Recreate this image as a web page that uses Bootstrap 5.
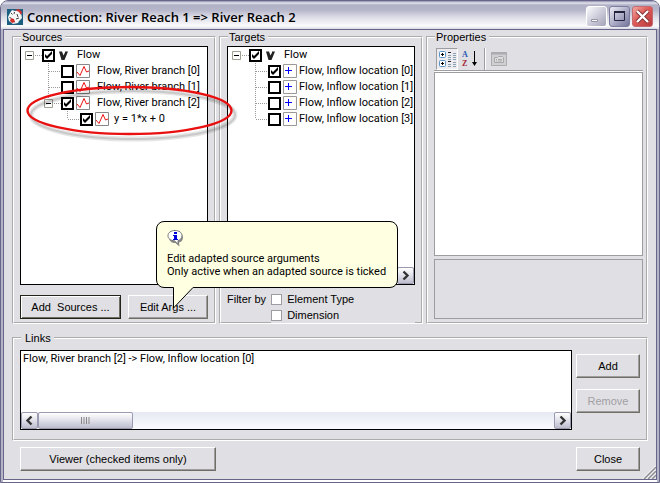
<!DOCTYPE html>
<html lang="en">
<head>
<meta charset="utf-8">
<meta name="viewport" content="width=device-width, initial-scale=1">
<title>Connection: River Reach 1 =&gt; River Reach 2</title>
<link href="https://cdn.jsdelivr.net/npm/bootstrap@5.3.0/dist/css/bootstrap.min.css" rel="stylesheet">
<style>
:root{--face:#e0dfe3;--frame:#67668a;--edge:#9d9da1;--ui:"Liberation Sans",Arial,sans-serif}
body{font:11px/16px Roboto,"Liberation Sans",Arial,sans-serif;color:#000;background:#fff}
.win{border:1px solid var(--frame);border-radius:8px 8px 0 0;padding:0 2px 2px;background:#fff;box-shadow:inset 2px 0 #b4b3c8,inset -2px 0 #b4b3c8,inset 0 -1px #fff}
.titlebar{height:28px;margin:0 -2px;padding:3px 6px 0 6px;border-radius:7px 7px 0 0;background:linear-gradient(#8f8fae 0,#e4e4ee 2px,#b0b0c6 4px,#b6b6ca 9px,#dcdce6 16px,#fbfbfd 25px,#d8d8e4 28px)}
.titlebar h1{font:600 13px/20px "Open Sans","Noto Sans",sans-serif;padding-left:4px}
.tb-set{gap:2px}
.tb-btn{width:21px;height:21px;padding:0;border:1px solid #fff;border-radius:3px;background:linear-gradient(135deg,#fafafd,#c4c4d4 60%,#a3a3b9);line-height:0}
.tb-max{background:linear-gradient(135deg,#eeeef6,#a9a9c4 55%,#74749c);border-color:#7c7c9f}
.tb-close{background:linear-gradient(135deg,#f0a9a0,#dd5a57 45%,#b93a3f);border-color:#c46a70}
.client{border:1px solid var(--frame);background:var(--face);padding:1px 8px 8px}
.groups{display:grid;grid-template-columns:204fr 204fr 222fr;gap:3px}
.groupbox{border:2px groove #fff;padding:3px 6px;min-width:0}
.groupbox legend{float:none;width:auto;font:11px/12px var(--ui);padding:0 3px 0 1px;margin:0 0 0 1px}
.groupbox .legend-links{padding:0 3px 0 4px}
.groupbox.links{padding:6px 6px 9px}
.groupbox.props{padding-right:3px}
.sunken{background:#fff;border:1px solid #000}
.link-list{min-height:80px}
.link-text{padding:0 2px}
.tree{padding:0 0 0 4px;margin:0;list-style:none;overflow:hidden;white-space:nowrap}
.tree li{display:flex;align-items:center;height:16px}
.tree svg{flex:none}
.tree label{display:flex;align-items:center}
.tick{appearance:none;flex:none;width:13px;height:13px;border:2px solid #000;background:#fff;margin:0;border-radius:0}
.tick:checked{background:#fff url("data:image/svg+xml,%3Csvg xmlns='http://www.w3.org/2000/svg' viewBox='0 0 9 9'%3E%3Cpath d='M1 3v3l2 2 5-5V0L3 5z'/%3E%3C/svg%3E") center/9px 9px no-repeat}
.flt{appearance:none;width:11px;height:11px;border:1px solid var(--edge);background:#fff;margin:0 5px 0 0}
.btn-classic{font:11px/16px var(--ui);color:#000;height:24px;padding:0 2px;border-radius:0;background:var(--face);border:1px solid;border-color:#fff #716f64 #716f64 #fff;box-shadow:inset -1px -1px var(--edge);white-space:pre}
.btn-classic:hover{background:var(--face)}
.btn-classic:disabled{color:#a2a0a5;background:var(--face);border-color:#fff #716f64 #716f64 #fff;opacity:1}
.btn-default{border-color:#22241c;box-shadow:inset 1px 1px #fff,inset -1px -1px #716f64}
.source-actions{margin-top:10px;gap:7px}
.w-side{width:64px}
.w-edit{width:80px}
.w-viewer{width:196px}
.link-actions{gap:11px}
.filter-row{margin-top:6px;gap:5px;font-family:var(--ui)}
.filters{background:var(--face);margin-bottom:-4px}
.sbar{height:17px;background:linear-gradient(#e6e9f2,#fbfbfe)}
.sbtn{width:17px;height:17px;padding:0;line-height:0;border:1px solid #9a9ab0;border-radius:2px;background:linear-gradient(#fff,#e0e0ea 50%,#bcbccd)}
.sthumb{width:95px}
.toolstrip{height:25px;border-bottom:1px solid var(--edge);box-shadow:0 1px #fff;padding:2px 0 0 2px}
.tool{padding:0;border:1px solid transparent;background:none;line-height:0;height:22px}
.tool-on{border-color:var(--edge) #fff #fff var(--edge);background:#ecebef}
.tool-sep{width:2px;margin:0 3px 0 4px;background:var(--edge);border-right:1px solid #fff}
.tool text{font:bold 8px "Liberation Serif",serif}
.desc{height:60px;border:1px solid var(--edge);margin-top:3px}
.grid-area{border:1px solid var(--edge);background:#fff;margin-top:1px}
.ring{left:19px;top:79px;pointer-events:none}
.balloon{left:155px;top:220px;width:242px;height:67px;padding:7px 10px;background:#ffffe1;border:1px solid #000;border-radius:8px;font-size:11px;line-height:13px;white-space:nowrap}
.balloon .tail{left:14px;top:64px}
.balloon .info{margin-bottom:5px}
.footer-row{padding:6px 8px 0 8px}
.grip{right:3px;bottom:3px}
</style>
</head>
<body>
<div class="win position-relative d-flex flex-column min-vh-100">
  <header class="titlebar d-flex align-items-center">
    <svg width="16" height="16" viewBox="0 0 16 16"><path d="M0 0h16v16H0z" fill="#1b5f80"/><path d="M3 4l2-3 3 1 4-1 2 3 1 5-3 3-1 2-5 1-4-3-1-4z" fill="#f6f6f6"/><path d="M4 4l1.500 1.500M7.500 3L7 5M2.500 8.500L4 9M9 10l3-1M10 5l1 3M6 12l2 1" stroke="#444"/><path d="M8 1l4-1 3 3-1 3-2-3zM4 9l3 1 1 3-3 1-2-2z" fill="#d0312d"/></svg>
    <h1 class="mb-0 flex-grow-1">Connection: River Reach 1 =&gt; River Reach 2</h1>
    <div class="tb-set d-flex">
      <button class="tb-btn" aria-label="Minimize"><svg width="19" height="19"><path d="M4.500 12.500h6v2h-6z" fill="#fff" stroke="#9696a8"/></svg></button>
      <button class="tb-btn tb-max" aria-label="Maximize"><svg width="19" height="19"><path d="M4.500 5.500h10v8h-10z" fill="none" stroke="#24243c"/><path d="M4 5h11" stroke="#24243c" stroke-width="2"/></svg></button>
      <button class="tb-btn tb-close" aria-label="Close window"><svg width="19" height="19"><path d="M4 4l11 11M15 4L4 15" stroke="#7e2c30" stroke-width="4"/><path d="M4 4l11 11M15 4L4 15" stroke="#fff" stroke-width="2.400"/></svg></button>
    </div>
  </header>
  <main class="client flex-grow-1 d-flex flex-column">
    <div class="groups flex-grow-1">
      <fieldset class="groupbox d-flex flex-column">
        <legend>Sources</legend>
        <ul class="tree sunken flex-grow-1">
          <li><svg width="17" height="16"><path d="M.5 4.500h8v8h-8z" fill="#fff" stroke="#a09f94"/><path d="M2 8.500h5" stroke="#000"/><path d="M10 8.500h7" stroke="#999" stroke-dasharray="1 1"/></svg><label><input class="tick" type="checkbox" checked><svg width="22" height="16"><path d="M4 4.500h3l1.500 4 1.500-3V4.500h3L9.500 13h-3z" fill="#222"/></svg>Flow</label></li>
          <li><svg width="36" height="16"><path d="M23.500 0v16M24 8.500h12" stroke="#999" stroke-dasharray="1 1"/></svg><label><input class="tick" type="checkbox"><svg width="23" height="16"><path d="M2.500 1.500h13v13h-13z" fill="#fff" stroke="#888"/><path d="M3 9l3 3.500 4-9 2.500 5.500 2.500-1" fill="none" stroke="#e11"/></svg>Flow, River branch [0]</label></li>
          <li><svg width="36" height="16"><path d="M23.500 0v16M24 8.500h12" stroke="#999" stroke-dasharray="1 1"/></svg><label><input class="tick" type="checkbox"><svg width="23" height="16"><path d="M2.500 1.500h13v13h-13z" fill="#fff" stroke="#888"/><path d="M3 9l3 3.500 4-9 2.500 5.500 2.500-1" fill="none" stroke="#e11"/></svg>Flow, River branch [1]</label></li>
          <li><svg width="36" height="16"><path d="M23.500 0v4M29 8.500h7" stroke="#999" stroke-dasharray="1 1"/><path d="M19.500 4.500h8v8h-8z" fill="#fff" stroke="#a09f94"/><path d="M21 8.500h5" stroke="#000"/></svg><label><input class="tick" type="checkbox" checked><svg width="23" height="16"><path d="M2.500 1.500h13v13h-13z" fill="#fff" stroke="#888"/><path d="M3 9l3 3.500 4-9 2.500 5.500 2.500-1" fill="none" stroke="#e11"/></svg>Flow, River branch [2]</label></li>
          <li><svg width="55" height="16"><path d="M42.500 0v8M43 8.500h12" stroke="#999" stroke-dasharray="1 1"/></svg><label><input class="tick" type="checkbox" checked><svg width="21" height="16"><path d="M2.500 1.500h13v13h-13z" fill="#fff" stroke="#888"/><path d="M3 9l3 3.500 4-9 2.500 5.500 2.500-1" fill="none" stroke="#e11"/></svg>y = 1*x + 0</label></li>
        </ul>
        <div class="source-actions d-flex">
          <button class="btn btn-classic btn-default flex-fill">Add  Sources ...</button>
          <button class="btn btn-classic w-edit">Edit Args ...</button>
        </div>
      </fieldset>
      <fieldset class="groupbox d-flex flex-column">
        <legend>Targets</legend>
        <div class="sunken flex-grow-1 d-flex flex-column">
          <ul class="tree flex-grow-1">
            <li><svg width="17" height="16"><path d="M.5 4.500h8v8h-8z" fill="#fff" stroke="#a09f94"/><path d="M2 8.500h5" stroke="#000"/><path d="M10 8.500h7" stroke="#999" stroke-dasharray="1 1"/></svg><label><input class="tick" type="checkbox" checked><svg width="22" height="16"><path d="M4 4.500h3l1.500 4 1.500-3V4.500h3L9.500 13h-3z" fill="#222"/></svg>Flow</label></li>
            <li><svg width="36" height="16"><path d="M23.500 0v16M24 8.500h12" stroke="#999" stroke-dasharray="1 1"/></svg><label><input class="tick" type="checkbox" checked><svg width="18" height="16"><path d="M2.500 1.500h13v13h-13z" fill="#fff" stroke="#999"/><path d="M4 7.500h7M7.500 4v7" stroke="#00f"/></svg>Flow, Inflow location [0]</label></li>
            <li><svg width="36" height="16"><path d="M23.500 0v16M24 8.500h12" stroke="#999" stroke-dasharray="1 1"/></svg><label><input class="tick" type="checkbox"><svg width="18" height="16"><path d="M2.500 1.500h13v13h-13z" fill="#fff" stroke="#999"/><path d="M4 7.500h7M7.500 4v7" stroke="#00f"/></svg>Flow, Inflow location [1]</label></li>
            <li><svg width="36" height="16"><path d="M23.500 0v16M24 8.500h12" stroke="#999" stroke-dasharray="1 1"/></svg><label><input class="tick" type="checkbox"><svg width="18" height="16"><path d="M2.500 1.500h13v13h-13z" fill="#fff" stroke="#999"/><path d="M4 7.500h7M7.500 4v7" stroke="#00f"/></svg>Flow, Inflow location [2]</label></li>
            <li><svg width="36" height="16"><path d="M23.500 0v8M24 8.500h12" stroke="#999" stroke-dasharray="1 1"/></svg><label><input class="tick" type="checkbox"><svg width="18" height="16"><path d="M2.500 1.500h13v13h-13z" fill="#fff" stroke="#999"/><path d="M4 7.500h7M7.500 4v7" stroke="#00f"/></svg>Flow, Inflow location [3]</label></li>
          </ul>
          <div class="sbar d-flex justify-content-end"><button class="sbtn" aria-label="Scroll right"><svg width="15" height="15"><path d="M5.500 3.500l4 4-4 4" fill="none" stroke="#333" stroke-width="2.400"/></svg></button></div>
        </div>
        <div class="filter-row d-flex">
          <span id="fl">Filter by</span>
          <div class="filters flex-grow-1" role="group" aria-labelledby="fl">
            <label class="d-flex align-items-center"><input class="flt" type="checkbox">Element Type</label>
            <label class="d-flex align-items-center"><input class="flt" type="checkbox">Dimension</label>
          </div>
        </div>
      </fieldset>
      <fieldset class="groupbox props d-flex flex-column">
        <legend>Properties</legend>
        <div class="toolstrip d-flex">
          <button class="tool tool-on" aria-label="Categorized"><svg width="20" height="20"><rect x="2.500" y="2.500" width="6" height="6" rx="1" fill="#fff" stroke="#5b93c4"/><rect x="2.500" y="11.500" width="6" height="6" rx="1" fill="#fff" stroke="#5b93c4"/><path d="M4 5.500h3M5.500 4v3M4 14.500h3M5.500 13v3" stroke="#000"/><path d="M11 3.500h3M11 12.500h3" stroke="#222"/><path d="M11 6.500h3M11 8.500h3M11 10.500h3M11 15.500h3M11 17.500h3M16 4.500h3M16 6.500h3M16 8.500h3M16 10.500h3M16 13.500h3M16 15.500h3M16 17.500h3" stroke="#8ba0b0"/></svg></button>
          <button class="tool" aria-label="Alphabetical"><svg width="20" height="20"><text x="3" y="8" fill="#2a56b0">A</text><text x="3" y="17" fill="#a02835">Z</text><path d="M15.500 2v12" stroke="#000"/><path d="M13 13h5l-2.500 4z" fill="#000"/></svg></button>
          <span class="tool-sep"></span>
          <button class="tool" aria-label="Property pages" disabled><svg width="18" height="20"><path d="M1.500 3.500h15v13h-15z" fill="#d0d0d3" stroke="#acacb0"/><path d="M1 4.500h16" stroke="#acacb0" stroke-width="2"/><path d="M4.500 8.500h3l1-1h4l1 1v5h-9z" fill="#ddd" stroke="#a8a8ac"/><path d="M6 10.500h1M8 10.500h4M6 12h1M8 12h4" stroke="#aaa"/></svg></button>
        </div>
        <div class="grid-area flex-grow-1"></div>
        <div class="desc"></div>
      </fieldset>
    </div>
    <fieldset class="groupbox links d-flex mt-2">
      <legend class="legend-links">Links</legend>
      <div class="link-list sunken flex-grow-1 d-flex flex-column">
        <div class="link-text flex-grow-1">Flow, River branch [2] -&gt; Flow, Inflow location [0]</div>
        <div class="sbar d-flex"><button class="sbtn" aria-label="Scroll left"><svg width="15" height="15"><path d="M9.500 3.500l-4 4 4 4" fill="none" stroke="#333" stroke-width="2.400"/></svg></button><button class="sbtn sthumb" aria-label="Scroll thumb"><svg width="9" height="7"><path d="M.5 0v7M3 0v7M5.500 0v7M8 0v7" stroke="#888"/></svg></button><button class="sbtn ms-auto" aria-label="Scroll right"><svg width="15" height="15"><path d="M5.500 3.500l4 4-4 4" fill="none" stroke="#333" stroke-width="2.400"/></svg></button></div>
      </div>
      <div class="link-actions d-flex flex-column ms-1 pt-1 w-side">
        <button class="btn btn-classic">Add</button>
        <button class="btn btn-classic" disabled>Remove</button>
      </div>
    </fieldset>
    <div class="footer-row d-flex justify-content-between">
      <button class="btn btn-classic w-viewer">Viewer (checked items only)</button>
      <button class="btn btn-classic w-side">Close</button>
    </div>
  </main>
  <svg class="grip position-absolute" width="14" height="14"><path d="M1 14L14 1M5 14l9-9M9 14l5-5" stroke="#fff" stroke-width="1.500"/><path d="M2 14L14 2M6 14l8-8M10 14l4-4" stroke="#8d8c92" stroke-width="1.500"/></svg>
  <svg class="ring position-absolute" width="225" height="66" fill="none"><ellipse cx="113" cy="35" rx="102" ry="24" stroke="#000" stroke-opacity=".1" stroke-width="5"/><ellipse cx="113" cy="35" rx="102" ry="24" stroke="#000" stroke-opacity=".12" stroke-width="2"/><ellipse cx="109.500" cy="30.500" rx="102" ry="23.500" stroke="#e81010" stroke-width="2.400"/></svg>
  <div class="balloon position-absolute" role="tooltip">
    <svg class="info d-block" width="18" height="18"><path d="M8.500 2.500c4 0 6.500 2 6.500 5s-2 4.500-4 5l.5 4-4-3.500c-4 0-6.500-2-6.500-5.500s3.500-5 7.500-5z" transform="translate(1 1)" fill="#888"/><path d="M8 1.500c4 0 7 2 7 5.200 0 2.800-2 4.300-4 4.900v3.600l-3.500-3.400C3.500 11.500 1 9.700 1 6.800 1 3.500 4 1.500 8 1.500z" fill="#fff" stroke="#777"/><path d="M7 3h3v2H7zM6 6h4v4h1v1H6v-1h1V7H6z" fill="#00d"/></svg>
    Edit adapted source arguments<br>Only active when an adapted source is ticked
    <svg class="tail position-absolute" width="26" height="24"><path d="M2.500 1v21L22.500 1z" fill="#ffffe1"/><path d="M2.500 1.500V22L22 1.500" fill="none" stroke="#000"/></svg>
  </div>
</div>
</body>
</html>
